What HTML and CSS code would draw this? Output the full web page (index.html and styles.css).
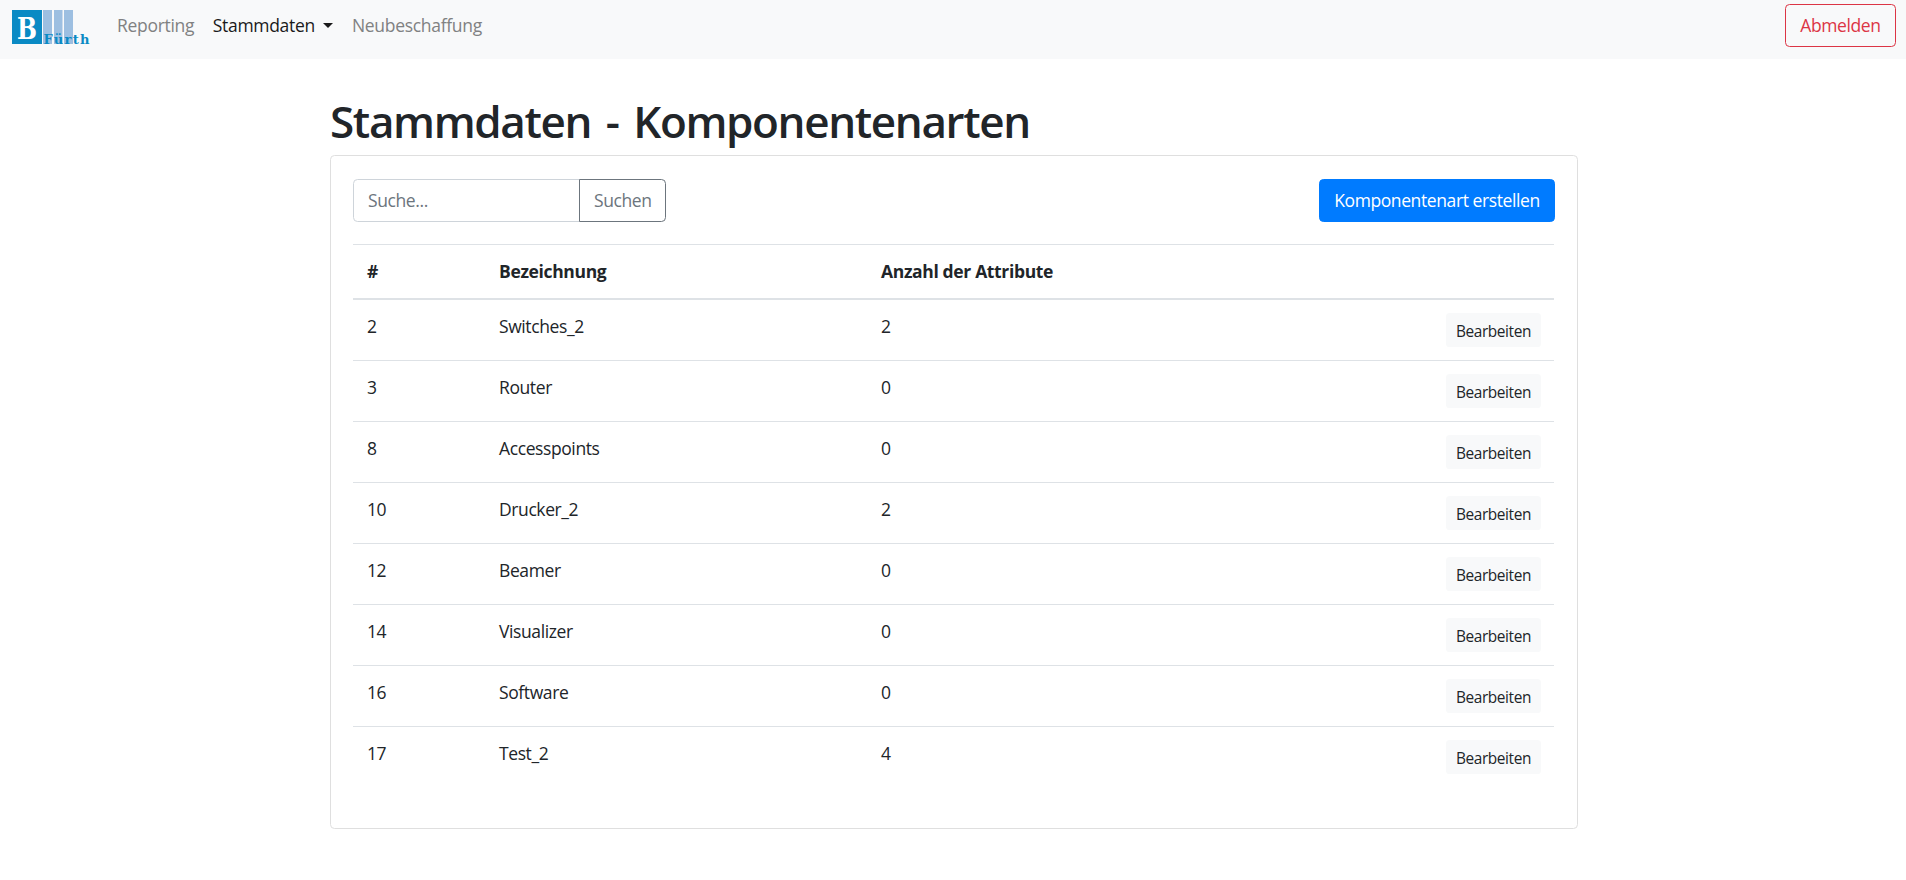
FILE: index.html
```html
<!DOCTYPE html>
<html lang="de">
<head>
<meta charset="utf-8">
<title>Stammdaten - Komponentenarten</title>
<link rel="stylesheet" href="styles.css">
</head>
<body>
<nav class="navbar">
  <a class="brand" href="#">
    <svg width="80" height="36" viewBox="0 0 80 36">
      <rect x="0" y="0" width="30" height="34" fill="#0a8ac4"/>
      <rect x="31" y="0" width="9" height="34" fill="#9dbfe1"/>
      <rect x="42" y="0" width="8.5" height="34" fill="#9dbfe1"/>
      <rect x="52" y="0" width="9" height="34" fill="#9dbfe1"/>
      <text class="logo-b" x="5" y="28.500" textLength="20" lengthAdjust="spacingAndGlyphs">B</text>
      <text class="logo-name" x="31.500" y="33.500" textLength="46">Fürth</text>
    </svg>
  </a>
  <ul class="nav">
    <li><a class="nav-link" href="#">Reporting</a></li>
    <li><a class="nav-link active" href="#">Stammdaten<span class="caret"></span></a></li>
    <li><a class="nav-link" href="#">Neubeschaffung</a></li>
  </ul>
  <button class="btn btn-danger">Abmelden</button>
</nav>
<main class="container">
  <h1>Stammdaten - Komponentenarten</h1>
  <section class="card">
    <div class="toolbar">
      <form class="search">
        <input type="text" placeholder="Suche...">
        <button type="button" class="btn btn-search">Suchen</button>
      </form>
      <button class="btn btn-primary">Komponentenart erstellen</button>
    </div>
    <table>
      <thead>
        <tr><th class="c-id">#</th><th class="c-name">Bezeichnung</th><th class="c-count">Anzahl der Attribute</th><th></th></tr>
      </thead>
      <tbody>
        <tr><td>2</td><td>Switches_2</td><td>2</td><td class="action"><button class="btn-sm">Bearbeiten</button></td></tr>
        <tr><td>3</td><td>Router</td><td>0</td><td class="action"><button class="btn-sm">Bearbeiten</button></td></tr>
        <tr><td>8</td><td>Accesspoints</td><td>0</td><td class="action"><button class="btn-sm">Bearbeiten</button></td></tr>
        <tr><td>10</td><td>Drucker_2</td><td>2</td><td class="action"><button class="btn-sm">Bearbeiten</button></td></tr>
        <tr><td>12</td><td>Beamer</td><td>0</td><td class="action"><button class="btn-sm">Bearbeiten</button></td></tr>
        <tr><td>14</td><td>Visualizer</td><td>0</td><td class="action"><button class="btn-sm">Bearbeiten</button></td></tr>
        <tr><td>16</td><td>Software</td><td>0</td><td class="action"><button class="btn-sm">Bearbeiten</button></td></tr>
        <tr><td>17</td><td>Test_2</td><td>4</td><td class="action"><button class="btn-sm">Bearbeiten</button></td></tr>
      </tbody>
    </table>
  </section>
</main>
</body>
</html>
```
FILE: styles.css
```css
* { box-sizing: border-box; }
body {
  margin: 0;
  background: #fff;
  color: #212529;
  font-family: "Segoe UI", "Open Sans", "Noto Sans", sans-serif;
  font-size: 17.5px;
  line-height: 27px;
  letter-spacing: -0.4px;
}
button, input { font: inherit; letter-spacing: inherit; margin: 0; }
a { text-decoration: none; color: inherit; }

.navbar {
  display: flex;
  align-items: flex-start;
  height: 59px;
  padding: 4px 10px 0 12px;
  background: #f8f9fa;
}
.brand { display: block; padding-top: 6px; width: 96px; }
.brand svg { display: block; }
.logo-b { font: bold 29px "DejaVu Serif", serif; fill: #fff; letter-spacing: 0; }
.logo-name { font: bold 13px "DejaVu Serif", serif; fill: #0a8ac4; letter-spacing: 0; }
.nav { display: flex; flex: 1; margin: 0; padding: 0; list-style: none; letter-spacing: -0.3px; }
.nav-link { display: flex; align-items: center; height: 43px; padding: 0 9.500px 0 9px; color: #808182; white-space: nowrap; }
.nav-link.active { color: #1a1a1a; }
.caret { margin-left: 8.500px; border: 5.500px solid transparent; border-top-color: currentColor; border-bottom: 0; }

.btn {
  height: 43px;
  padding: 0 14px;
  border: 1px solid;
  border-radius: 4.500px;
  background: transparent;
  white-space: nowrap;
}
.btn-danger { width: 111px; color: #dc3545; border-color: #dc3545; }

.container { width: 1248px; margin: 0 auto 0 330px; padding-top: 35px; }
h1 {
  margin: 0 0 7px;
  font-size: 44px;
  font-weight: 600;
  line-height: 54px;
  letter-spacing: -1.350px;
  word-spacing: 4.500px;
  white-space: nowrap;
}
.card {
  height: 674px;
  padding: 23px 22px 0 22px;
  border: 1px solid #dfdfdf;
  border-radius: 4.500px;
}
.toolbar { display: flex; justify-content: space-between; margin-bottom: 22px; }
.search { display: flex; }
.search input {
  width: 227px;
  height: 43px;
  padding: 0 14px 1px;
  border: 1px solid #ced4da;
  border-radius: 4.500px 0 0 4.500px;
  background: #fff;
}
.search input::placeholder { color: #6c757d; opacity: 1; }
.btn-search { width: 87px; margin-left: -1px; color: #6c757d; border-color: #6c757d; border-radius: 0 4.500px 4.500px 0; }
.btn-primary { width: 236px; color: #fff; background: #007bff; border-color: #007bff; }

table { width: 1201px; border-collapse: separate; border-spacing: 0; table-layout: fixed; }
th, td { height: 61px; padding: 13px 14px 0; border-top: 1px solid #dee2e6; text-align: left; vertical-align: top; }
th { height: 56px; border-bottom: 2px solid #dee2e6; font-weight: 700; letter-spacing: -0.350px; }
tbody tr:first-child td { height: 60px; border-top: 0; }
.c-id { width: 132px; }
.c-name { width: 382px; }
.c-count { width: 450px; }
td.action { padding-right: 13px; }
.btn-sm {
  display: block;
  width: 95px;
  height: 34px;
  margin-left: auto;
  padding: 3px 0 0;
  border: 0;
  border-radius: 3.600px;
  background: #f8f9fa;
  color: #212529;
  font-size: 15.400px;
}
```
